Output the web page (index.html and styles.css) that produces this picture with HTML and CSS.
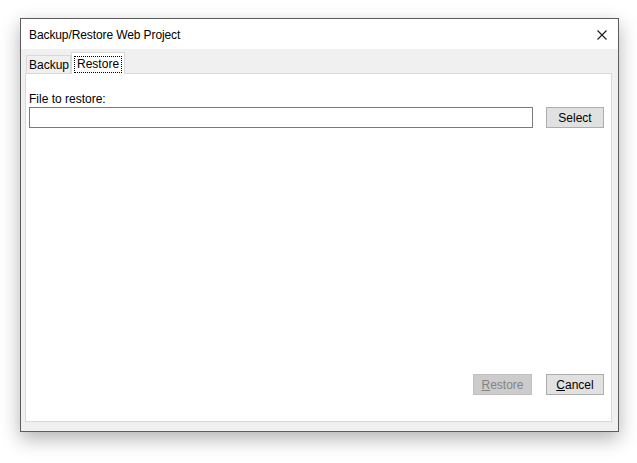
FILE: index.html
```html
<!doctype html>
<html>
<head>
	<meta charset="UTF-8">
	<title>Backup/Restore Web Project</title>
	<link rel="stylesheet" href="styles.css">
</head>
<body>
	<div class="window">
		<div class="titlebar">
			<span class="title">Backup/Restore Web Project</span>
			<svg class="close" width="10" height="10" viewBox="0 0 10 10">
				<path d="M0.5 0.5 L9.5 9.5 M9.5 0.5 L0.5 9.5" stroke="#1a1a1a" stroke-width="1.1" fill="none"/>
			</svg>
		</div>
		<div class="client">
			<div class="tabs">
				<div class="tab">Backup</div>
				<div class="tab active"><span class="focus">Restore</span></div>
			</div>
			<div class="panel">
				<label class="label">File to restore:</label>
				<div class="row">
					<input type="text" class="field">
					<button type="button" class="btn">Select</button>
				</div>
				<div class="spacer"></div>
				<div class="actions">
					<button type="button" class="btn" disabled><u>R</u>estore</button>
					<button type="button" class="btn"><u>C</u>ancel</button>
				</div>
			</div>
		</div>
	</div>
</body>
</html>
```

FILE: styles.css
```css
* {
	padding: 0;
	margin: 0;
	box-sizing: border-box;
}
html, body {
	height: 100%;
}
body {
	background-color: #fff;
	font-family: "Liberation Sans", Arial, sans-serif;
	font-size: 12px;
	color: #000;
	padding: 18px 0 0 20px;
}
.window {
	width: 599px;
	height: 414px;
	border: 1px solid #5c5c5c;
	background-color: #f0f0f0;
	box-shadow: 0 7px 18px rgba(0, 0, 0, 0.3);
	display: flex;
	flex-direction: column;
}
.titlebar {
	height: 30px;
	background-color: #fff;
	display: flex;
	align-items: center;
	padding: 0 11px 0 8px;
}
.title {
	flex: 1;
	font-size: 12px;
	letter-spacing: -0.1px;
	padding-top: 1px;
}
.close {
	display: block;
	margin-top: 1px;
}
.client {
	flex: 1;
	display: flex;
	flex-direction: column;
	padding: 3px 6px 9px 4px;
}
.tabs {
	display: flex;
	align-items: flex-end;
	height: 21px;
	padding-left: 1px;
	position: relative;
	z-index: 1;
}
.tab {
	height: 18px;
	border: 1px solid #d9d9d9;
	border-bottom: none;
	padding: 2px 1px 0 2px;
	background-color: #f0f0f0;
}
.tab.active {
	height: 22px;
	margin-bottom: -1px;
	background-color: #fff;
	padding: 3px 2px 0 2px;
}
.focus {
	display: block;
	border: 1px dotted #000;
	padding: 0 2px 1px 2px;
	line-height: 14px;
}
.panel {
	flex: 1;
	background-color: #fff;
	border: 1px solid #d9d9d9;
	display: flex;
	flex-direction: column;
	padding: 18px 7px 26px 3px;
}
.label {
	display: block;
	line-height: 15px;
}
.row {
	display: flex;
	gap: 13px;
}
.field {
	flex: 1;
	height: 21px;
	border: 1px solid #7a7a7a;
	background-color: #fff;
	font: inherit;
	padding: 0 3px;
}
.btn {
	width: 58px;
	height: 21px;
	border: 1px solid #adadad;
	background-color: #e1e1e1;
	font: inherit;
	color: #000;
}
.btn:disabled {
	width: 59px;
	background-color: #cccccc;
	border-color: #bfbfbf;
	color: #838383;
}
.btn u {
	text-decoration-thickness: 1px;
}
.spacer {
	flex: 1;
}
.actions {
	display: flex;
	justify-content: flex-end;
	gap: 14px;
}
```
